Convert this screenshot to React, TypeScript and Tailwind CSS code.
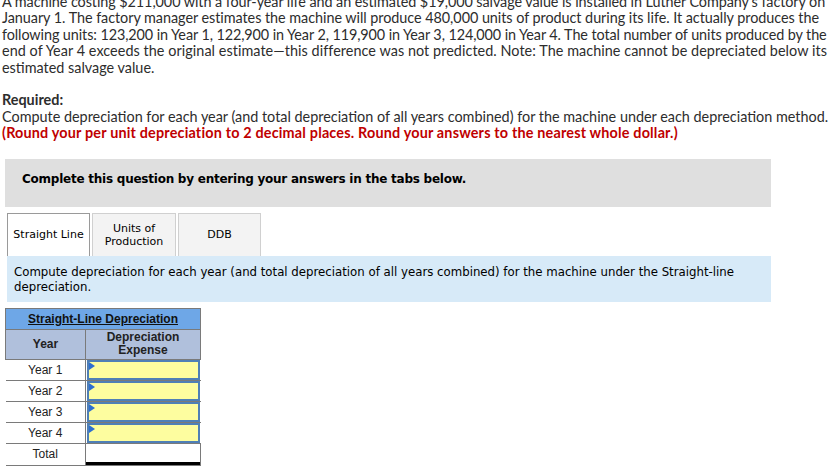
import React from "react";

const sans = { fontFamily: "Lato, 'Open Sans', sans-serif" };

function InputCell() {
  return (
    <td className="p-0 border-l border-[#7a7a7a]">
      <div className="relative h-[20px] bg-[#fdfd9f] border-2 border-[#4f7fb6] mx-[1px]">
        <div className="absolute left-0 top-0 w-0 h-0 border-t-[4px] border-b-[4px] border-l-[6px] border-t-transparent border-b-transparent border-l-[#2e6fd0]" />
      </div>
    </td>
  );
}

export default function App() {
  const rows = ["Year 1", "Year 2", "Year 3", "Year 4"];
  const intro: [string, string][] = [
    ["A machine costing $211,000 with a four-year life and an estimated $19,000 salvage value is installed in Luther Company’s factory on", "tracking-[-0.07px]"],
    ["January 1. The factory manager estimates the machine will produce 480,000 units of product during its life. It actually produces the", "tracking-[-0.045px]"],
    ["following units: 123,200 in Year 1, 122,900 in Year 2, 119,900 in Year 3, 124,000 in Year 4. The total number of units produced by the", "tracking-[-0.09px]"],
    ["end of Year 4 exceeds the original estimate—this difference was not predicted. Note: The machine cannot be depreciated below its", "tracking-[0.055px]"],
    ["estimated salvage value.", ""],
  ];
  return (
    <div className="w-[833px] h-[470px] overflow-hidden bg-white relative">
      <div className="-mt-[6px] pl-[2px] text-[14.4px] leading-[16.4px] text-[#2d2d2d]" style={sans}>
        <p>
          {intro.map(([l, t]) => (
            <span key={l} className={`block whitespace-nowrap ${t}`}>{l}</span>
          ))}
        </p>
        <p className="mt-[16.4px] font-bold">Required:</p>
        <p className="whitespace-nowrap">Compute depreciation for each year (and total depreciation of all years combined) for the machine under each depreciation method.</p>
        <p className="whitespace-nowrap font-bold text-[#c00000] tracking-[0.18px]">(Round your per unit depreciation to 2 decimal places. Round your answers to the nearest whole dollar.)</p>
      </div>

      <div className="ml-[5px] w-[766px]" style={{ fontFamily: "'DejaVu Sans', Verdana, sans-serif" }}>
        <div className="mt-[17px] h-[48px] bg-[#dfdfdf] pt-[13px] pl-[17px] text-[12px] leading-[15px] tracking-[-0.24px] font-bold text-black">
          Complete this question by entering your answers in the tabs below.
        </div>
        <div className="mt-[6px] ml-[2px] flex gap-[2px] text-[11px] text-black leading-[13px]">
          <div className="w-[83px] h-[43px] border border-b-0 border-[#9a9a9a] bg-white flex items-center justify-center text-center">
            Straight Line
          </div>
          <div className="w-[84px] h-[43px] border border-b-0 border-[#d0d0d0] bg-[#f3f3f3] flex items-center justify-center text-center">
            Units of<br />Production
          </div>
          <div className="w-[83px] h-[43px] border border-b-0 border-[#d0d0d0] bg-[#f3f3f3] flex items-center justify-center text-center">
            DDB
          </div>
        </div>
        <div className="ml-[2px] h-[46px] bg-[#d7eaf8] px-[7px] pt-[9px] text-[11.75px] leading-[15px] text-black">
          Compute depreciation for each year (and total depreciation of all years combined) for the machine under the Straight-line depreciation.
        </div>
      </div>

      <table
        className="mt-[6px] ml-[5px] border-collapse text-[12px] text-[#222]"
        style={{ fontFamily: "'Liberation Sans', Arial, sans-serif" }}
      >
        <tbody>
          <tr>
            <th colSpan={2} className="h-[21px] bg-[#6ea7e7] border border-[#7a7a7a] p-0 font-bold underline text-[#111]">
              Straight-Line Depreciation
            </th>
          </tr>
          <tr>
            <th className="w-[80px] h-[30px] bg-[#b0c0dc] border border-[#7a7a7a] p-0 font-bold">Year</th>
            <th className="w-[115px] h-[30px] bg-[#b0c0dc] border border-[#7a7a7a] p-0 font-bold leading-[13px]">
              Depreciation<br />Expense
            </th>
          </tr>
          {rows.map((r) => (
            <tr key={r} className="border-b border-[#7a7a7a]">
              <td className="h-[20px] text-center p-0">{r}</td>
              <InputCell />
            </tr>
          ))}
          <tr className="border-b border-[#7a7a7a]">
            <td className="h-[21px] text-center p-0">Total</td>
            <td className="p-0 border-l border-r border-[#7a7a7a]">
              <div className="h-[21px] border-b-[3px] border-black" />
            </td>
          </tr>
        </tbody>
      </table>
    </div>
  );
}
